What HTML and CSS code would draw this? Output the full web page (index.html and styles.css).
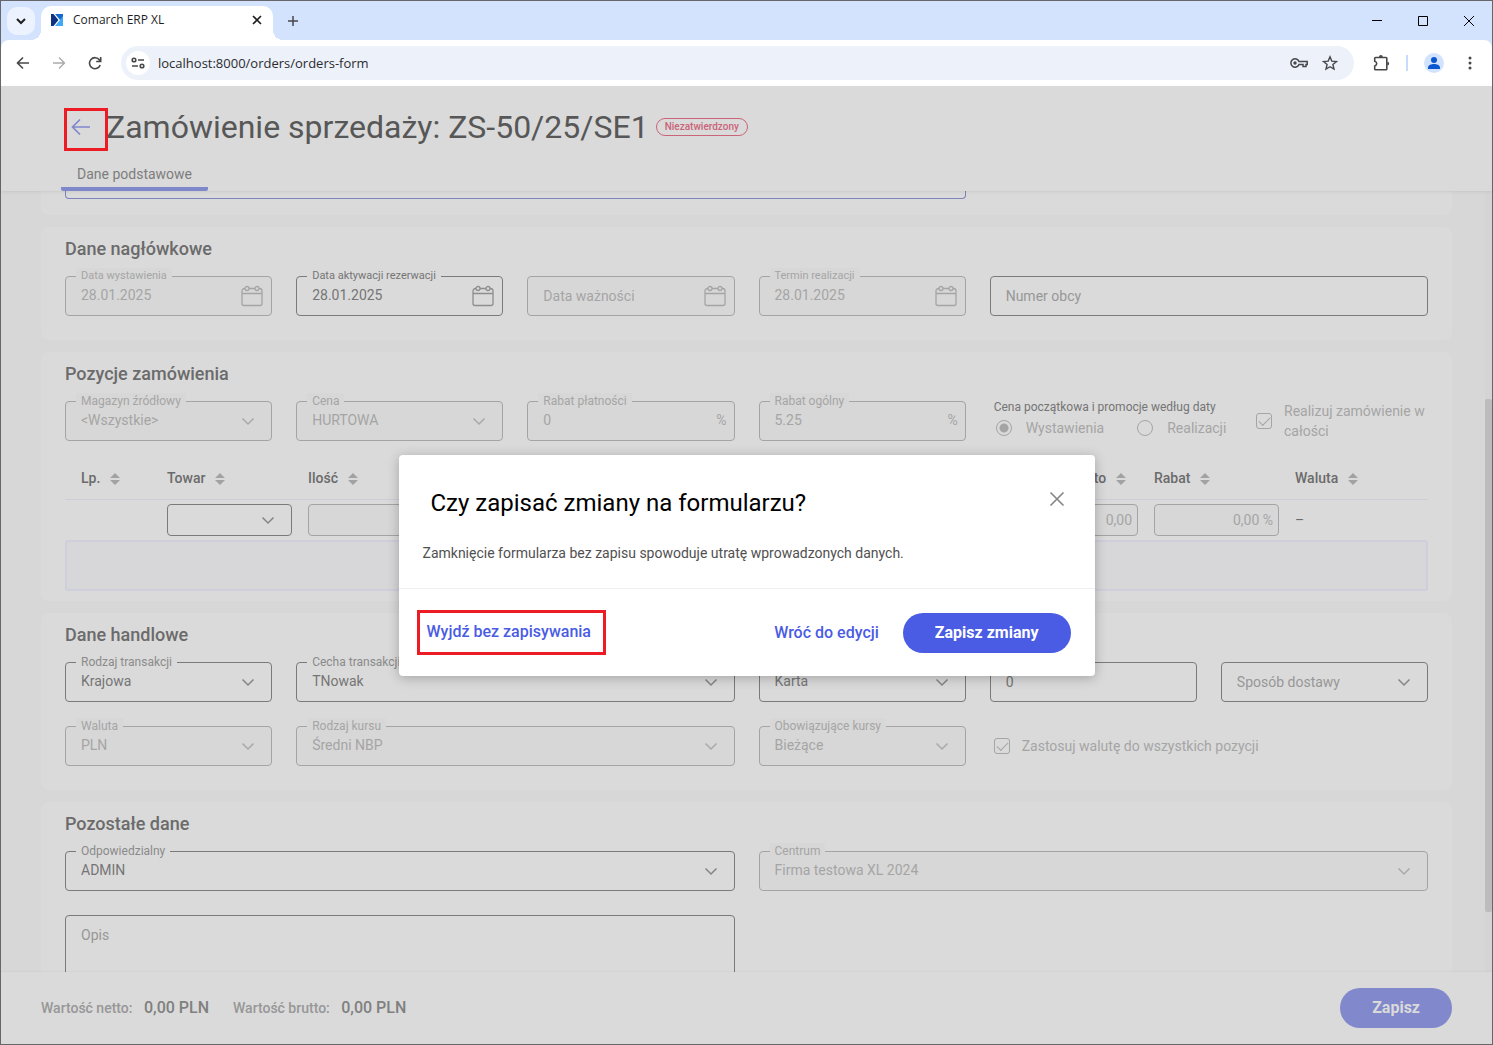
FILE: index.html
```html
<!DOCTYPE html>
<html lang="pl">
<head>
<meta charset="utf-8">
<title>Comarch ERP XL</title>
<link rel="stylesheet" href="styles.css">
</head>
<body>
<svg class="sprite" aria-hidden="true">
  <symbol id="chevron" viewBox="0 0 24 24"><path d="M6.500 9.500l5.500 5.500 5.500-5.500" fill="none" stroke="currentColor" stroke-width="1.500"/></symbol>
  <symbol id="calendar" viewBox="0 0 24 24"><g fill="none" stroke="currentColor" stroke-width="1.300"><path d="M5 4.500H4.500a2.500 2.500 0 0 0-2.500 2.500v12.500a2 2 0 0 0 2 2h16a2 2 0 0 0 2-2V7a2.500 2.500 0 0 0-2.500-2.500H19M9 4.500h6M2 9.500h20"/><circle cx="7" cy="4.500" r="2"/><circle cx="17" cy="4.500" r="2"/></g></symbol>
  <symbol id="sort" viewBox="0 0 10 12"><path d="M5 0l5 5H0zM5 12l5-5H0z" fill="currentColor"/></symbol>
</svg>
<div class="window">
  <header class="tabstrip">
    <button class="tab-search" aria-label="Karty"><svg width="12" height="12" viewBox="0 0 12 12"><path d="M2 4l4 4 4-4" fill="none" stroke="currentColor" stroke-width="2"/></svg></button>
    <div class="tab">
      <svg width="12" height="12" viewBox="0 0 12 12"><path d="M0 0h12v12H0z" fill="#3fa9f5"/><path d="M4 0h8v2L9 6z" fill="#1668d0"/><path d="M0 0h3l5 6-5 6H0z" fill="#10317f"/><path d="M2.500 0h1.500l5 6-5 6H2.500l5-6z" fill="#fff"/></svg>
      <span class="tab-title">Comarch ERP XL</span>
      <button class="plain" aria-label="Zamknij kartę"><svg width="10" height="10" viewBox="0 0 10 10"><path d="M1 1l8 8M9 1l-8 8" stroke="currentColor" stroke-width="1.600"/></svg></button>
    </div>
    <button class="plain new-tab" aria-label="Nowa karta"><svg width="12" height="12" viewBox="0 0 12 12"><path d="M6 1v10M1 6h10" stroke="currentColor" stroke-width="1.500"/></svg></button>
    <div class="window-controls">
      <button class="plain" aria-label="Minimalizuj"><svg width="12" height="12" viewBox="0 0 12 12"><path d="M1 5.500h10" stroke="currentColor"/></svg></button>
      <button class="plain" aria-label="Maksymalizuj"><svg width="12" height="12" viewBox="0 0 12 12"><path d="M1.500 1.500h9v9h-9z" fill="none" stroke="currentColor"/></svg></button>
      <button class="plain" aria-label="Zamknij okno"><svg width="12" height="12" viewBox="0 0 12 12"><path d="M1 1l10 10M11 1L1 11" stroke="currentColor"/></svg></button>
    </div>
  </header>
  <nav class="toolbar">
    <button class="plain" aria-label="Wstecz"><svg width="14" height="14" viewBox="0 0 14 14"><path d="M13 7H2M7 1.500L1.500 7 7 12.500" fill="none" stroke="currentColor" stroke-width="1.600"/></svg></button>
    <button class="plain faded" aria-label="Dalej"><svg width="14" height="14" viewBox="0 0 14 14"><path d="M1 7h11M7 1.500L12.500 7 7 12.500" fill="none" stroke="currentColor" stroke-width="1.400"/></svg></button>
    <button class="plain" aria-label="Odśwież"><svg width="14" height="14" viewBox="0 0 14 14"><path d="M12.200 9A5.500 5.500 0 1 1 11.500 4L12.500 5M12.700 1v4.500H8.200" fill="none" stroke="currentColor" stroke-width="1.600"/></svg></button>
    <div class="omnibox">
      <button class="plain site-info" aria-label="Informacje o witrynie"><svg width="14" height="12" viewBox="0 0 14 12"><g fill="none" stroke="currentColor" stroke-width="1.600"><circle cx="3" cy="3" r="1.800"/><path d="M7 3h6M1 9h6"/><circle cx="11" cy="9" r="1.800"/></g></svg></button>
      <input class="address" aria-label="Adres" value="localhost:8000/orders/orders-form">
      <button class="plain" aria-label="Hasła"><svg width="18" height="12" viewBox="0 0 18 12"><g fill="none" stroke="currentColor" stroke-width="1.500"><path d="M9 4.500h8.200v3H16v2h-3v-2H9a4.200 4.200 0 1 1 0-3z"/></g><circle cx="5" cy="6" r="1.700" fill="currentColor"/></svg></button>
      <button class="plain" aria-label="Zakładka"><svg width="16" height="16" viewBox="0 0 16 16"><path d="M8 1.800l1.800 4.300 4.700.4-3.600 3 1.100 4.600L8 11.700l-4 2.400 1.100-4.600-3.600-3 4.700-.4z" fill="none" stroke="currentColor" stroke-width="1.400"/></svg></button>
    </div>
    <button class="plain extensions" aria-label="Rozszerzenia"><svg width="18" height="18" viewBox="0 0 18 18"><path d="M3.500 3.500H14a.8.8 0 0 1 .8.800V15a.8.8 0 0 1-.8.800H3.500a.8.8 0 0 1-.8-.8v-3q2-.6 2-2.400t-2-2.400V4.300a.8.8 0 0 1 .8-.8z" fill="none" stroke="currentColor" stroke-width="1.600"/><path d="M7 3a1.900 1.900 0 0 1 3.800 0zM15.300 7.700a1.900 1.900 0 0 1 0 3.800z" fill="currentColor"/></svg></button>
    <span class="separator"></span>
    <button class="plain profile" aria-label="Profil"><svg width="14" height="14" viewBox="0 0 14 14"><circle cx="7" cy="4" r="3" fill="#0b57d0"/><path d="M1 13v-1.500C1 9 4.500 8 7 8s6 1 6 3.500V13z" fill="#0b57d0"/></svg></button>
    <button class="plain" aria-label="Menu"><svg width="4" height="14" viewBox="0 0 4 14"><g fill="currentColor"><circle cx="2" cy="2" r="1.500"/><circle cx="2" cy="7" r="1.500"/><circle cx="2" cy="12" r="1.500"/></g></svg></button>
  </nav>

  <main class="app">
    <header class="page-head">
      <div class="title-row">
        <button class="back" aria-label="Wróć"><svg width="20" height="18" viewBox="0 0 20 18"><path d="M19 9H2M9 1.500L1.500 9 9 16.500" fill="none" stroke="currentColor" stroke-width="1.700"/></svg></button>
        <h1>Zamówienie sprzedaży: ZS-50/25/SE1</h1>
        <span class="status">Niezatwierdzony</span>
      </div>
      <a class="page-tab" href="#dane">Dane podstawowe</a>
    </header>

    <div class="scroll-area">
      <div class="sections" id="dane">
        <section class="card card-clipped">
          <div class="grid"><div class="field focused span-4"><input aria-label="Kontrahent"></div></div>
        </section>

        <section class="card">
          <h2>Dane nagłówkowe</h2>
          <div class="grid dates">
            <div class="field disabled"><label for="f1">Data wystawienia</label><input id="f1" value="28.01.2025" disabled><svg class="cal"><use href="#calendar"/></svg></div>
            <div class="field"><label class="strong" for="f2">Data aktywacji rezerwacji</label><input id="f2" value="28.01.2025"><svg class="cal"><use href="#calendar"/></svg></div>
            <div class="field disabled"><input aria-label="Data ważności" placeholder="Data ważności" disabled><svg class="cal"><use href="#calendar"/></svg></div>
            <div class="field disabled"><label for="f4">Termin realizacji</label><input id="f4" value="28.01.2025" disabled><svg class="cal"><use href="#calendar"/></svg></div>
            <div class="field span-2"><input aria-label="Numer obcy" placeholder="Numer obcy"></div>
          </div>
        </section>

        <section class="card card-items">
          <h2>Pozycje zamówienia</h2>
          <div class="grid">
            <div class="field disabled"><label for="f6">Magazyn źródłowy</label><select id="f6" disabled><option>&lt;Wszystkie&gt;</option></select><svg class="chev"><use href="#chevron"/></svg></div>
            <div class="field disabled"><label for="f7">Cena</label><select id="f7" disabled><option>HURTOWA</option></select><svg class="chev"><use href="#chevron"/></svg></div>
            <div class="field disabled"><label for="f8">Rabat płatności</label><input id="f8" value="0" disabled><span class="unit">%</span></div>
            <div class="field disabled"><label for="f9">Rabat ogólny</label><input id="f9" value="5.25" disabled><span class="unit">%</span></div>
            <div class="options span-2">
              <fieldset class="radios">
                <legend>Cena początkowa i promocje według daty</legend>
                <label><input type="radio" name="wg" checked disabled>Wystawienia</label>
                <label><input type="radio" name="wg" disabled>Realizacji</label>
              </fieldset>
              <label class="check whole"><input type="checkbox" checked disabled><span>Realizuj zamówienie w całości</span></label>
            </div>
          </div>
          <table class="items">
            <colgroup><col class="col-no"><col class="col"><col class="col"><col class="col"><col class="col"><col class="col"><col class="col"><col class="col"><col class="col"><col></colgroup>
            <thead><tr>
              <th>Lp.<svg class="sort"><use href="#sort"/></svg></th>
              <th>Towar<svg class="sort"><use href="#sort"/></svg></th>
              <th>Ilość<svg class="sort"><use href="#sort"/></svg></th>
              <th></th><th></th><th></th><th></th>
              <th>Wartość brutto<svg class="sort"><use href="#sort"/></svg></th>
              <th>Rabat<svg class="sort"><use href="#sort"/></svg></th>
              <th>Waluta<svg class="sort"><use href="#sort"/></svg></th>
            </tr></thead>
            <tbody><tr>
              <td></td>
              <td><div class="field small"><select aria-label="Towar"><option></option></select><svg class="chev"><use href="#chevron"/></svg></div></td>
              <td><div class="field small disabled"><input aria-label="Ilość" disabled></div></td>
              <td></td><td></td><td></td><td></td>
              <td><div class="field small disabled"><input class="num" aria-label="Wartość brutto" value="0,00" disabled></div></td>
              <td><div class="field small disabled"><input class="num" aria-label="Rabat" value="0,00 %" disabled></div></td>
              <td>–</td>
            </tr></tbody>
          </table>
          <div class="drop-row"></div>
        </section>

        <section class="card">
          <h2>Dane handlowe</h2>
          <div class="grid">
            <div class="field"><label for="g1">Rodzaj transakcji</label><select id="g1"><option>Krajowa</option></select><svg class="chev"><use href="#chevron"/></svg></div>
            <div class="field span-2"><label for="g2">Cecha transakcji</label><select id="g2"><option>TNowak</option></select><svg class="chev"><use href="#chevron"/></svg></div>
            <div class="field"><label for="g3">Forma płatności</label><select id="g3"><option>Karta</option></select><svg class="chev"><use href="#chevron"/></svg></div>
            <div class="field"><input aria-label="Termin płatności" value="0"></div>
            <div class="field"><select class="empty" aria-label="Sposób dostawy"><option>Sposób dostawy</option></select><svg class="chev"><use href="#chevron"/></svg></div>
            <div class="field disabled"><label for="g6">Waluta</label><select id="g6" disabled><option>PLN</option></select><svg class="chev"><use href="#chevron"/></svg></div>
            <div class="field disabled span-2"><label for="g7">Rodzaj kursu</label><select id="g7" disabled><option>Średni NBP</option></select><svg class="chev"><use href="#chevron"/></svg></div>
            <div class="field disabled"><label for="g8">Obowiązujące kursy</label><select id="g8" disabled><option>Bieżące</option></select><svg class="chev"><use href="#chevron"/></svg></div>
            <label class="check currency span-2"><input type="checkbox" checked disabled><span>Zastosuj walutę do wszystkich pozycji</span></label>
          </div>
        </section>

        <section class="card">
          <h2>Pozostałe dane</h2>
          <div class="grid">
            <div class="field span-3"><label for="h1">Odpowiedzialny</label><select id="h1"><option>ADMIN</option></select><svg class="chev"><use href="#chevron"/></svg></div>
            <div class="field disabled span-3"><label for="h2">Centrum</label><select id="h2" disabled><option>Firma testowa XL 2024</option></select><svg class="chev"><use href="#chevron"/></svg></div>
            <div class="field tall span-3"><textarea aria-label="Opis" placeholder="Opis"></textarea></div>
          </div>
        </section>
      </div>
      <div class="scrollbar"><span class="before"></span><span class="thumb"></span><span class="after"></span></div>
    </div>

    <footer class="page-foot">
      <span class="sum">Wartość netto: <strong>0,00 PLN</strong></span>
      <span class="sum">Wartość brutto: <strong>0,00 PLN</strong></span>
      <button class="pill muted">Zapisz</button>
    </footer>

    <div class="overlay">
      <div class="dialog" role="dialog" aria-labelledby="dlg-title">
        <div class="dialog-head">
          <h2 id="dlg-title">Czy zapisać zmiany na formularzu?</h2>
          <button class="plain close" aria-label="Zamknij"><svg width="16" height="16" viewBox="0 0 16 16"><path d="M1.500 1.500l13 13M14.500 1.500l-13 13" stroke="currentColor" stroke-width="1.600"/></svg></button>
        </div>
        <p>Zamknięcie formularza bez zapisu spowoduje utratę wprowadzonych danych.</p>
        <div class="dialog-foot">
          <button class="link marked">Wyjdź bez zapisywania</button>
          <button class="link">Wróć do edycji</button>
          <button class="pill">Zapisz zmiany</button>
        </div>
      </div>
    </div>
  </main>
</div>
</body>
</html>
```
FILE: styles.css
```css
* { box-sizing: border-box; }
body { margin: 0; font: 14px/20px Roboto, sans-serif; color: #6b6b6b; }
button, input, select, textarea { font: inherit; color: inherit; margin: 0; }
h1, h2, p { margin: 0; font-weight: 400; }
.sprite { display: none; }
.window { display: flex; flex-direction: column; height: 100vh; border: 1px solid #66666b; background: #d3e3fd; }
.plain { display: flex; align-items: center; justify-content: center; padding: 0; border: 0; background: none; }

/* Browser frame */
.tabstrip { display: flex; align-items: center; height: 39px; padding-left: 6px; color: #1f1f1f; }
.tab-search { display: flex; align-items: center; justify-content: center; width: 28px; height: 28px; padding: 0; border: 0; border-radius: 10px; background: #ecf2fe; }
.tab { position: relative; display: flex; align-items: center; align-self: flex-end; width: 232px; height: 34px; margin-left: 6px; padding: 0 11px 6px 10px; border-radius: 10px 10px 0 0; background: #fff; }
.tab::before, .tab::after { content: ""; position: absolute; bottom: 0; width: 10px; height: 10px; }
.tab::before { right: 100%; background: radial-gradient(circle at 0 0, transparent 10px, #fff 10px); }
.tab::after { left: 100%; background: radial-gradient(circle at 100% 0, transparent 10px, #fff 10px); }
.tab-title { flex: 1; margin-left: 10px; font: 12px/16px "Open Sans", sans-serif; }
.new-tab { margin-left: 14px; color: #47484a; }
.window-controls { display: flex; gap: 34px; margin-left: auto; padding-right: 17px; color: #000; }
.toolbar { display: flex; align-items: center; height: 46px; padding: 0 20px 0 15px; gap: 22px; border-radius: 8px 8px 0 0; background: #fff; color: #47484a; }
.faded { color: #a9abad; }
.omnibox { display: flex; align-items: center; flex: 1; gap: 14px; height: 34px; margin-left: -3px; padding: 0 16px 0 5px; border-radius: 17px; background: #edf1fa; }
.site-info { width: 24px; height: 24px; border-radius: 12px; background: #fff; }
.address { flex: 1; margin-left: -6px; padding: 0; border: 0; background: none; font: 13px/20px "Open Sans", sans-serif; color: #2b2c2e; }
.extensions { margin-left: -4px; }
.separator { width: 2px; height: 16px; margin: 0 -6px; background: #c7dbfb; }
.profile { width: 20px; height: 20px; margin-right: 2px; border-radius: 10px; background: #d3e3fd; }

/* Page */
.app { position: relative; display: flex; flex: 1; flex-direction: column; min-height: 0; background: #d7d7d7; }
.page-head { position: relative; z-index: 1; height: 105px; padding: 22px 60px 0; background: #dadada; box-shadow: 0 1px 3px rgba(0, 0, 0, .08); }
.title-row { display: flex; align-items: center; height: 43px; padding-left: 3px; }
.back { position: relative; display: flex; align-items: center; width: 44px; height: 43px; padding: 0 0 6px 4px; border: 3px solid #ed1c24; background: none; color: #8088cc; }
h1 { margin-left: -2px; padding-bottom: 6px; font-size: 32px; line-height: 40px; color: #575757; white-space: nowrap; }
.status { margin: 0 0 6px 7px; padding: 0 8px; border: 1px solid #ca6478; border-radius: 9px; font-size: 10px; font-weight: 500; line-height: 16px; color: #ca6478; }
.page-tab { display: inline-block; height: 36px; margin-top: 4px; padding: 9px 16px 0; border-bottom: 4px solid #8088cc; border-radius: 2px; line-height: 20px; color: #7d7d7d; text-decoration: none; }
.scroll-area { display: flex; flex: 1; min-height: 0; overflow: hidden; }
.sections { display: flex; flex: 1; flex-direction: column; gap: 12px; padding: 0 33px 0 40px; }
.scrollbar { display: flex; flex-direction: column; width: 7px; background: #d4d4d4; }
.before { flex: 208; }
.thumb { flex: 513; border-radius: 2px; background: #bcbcbc; }
.after { flex: 60; }

.card { flex: none; padding: 12px 24px 24px; border-radius: 8px; background: #dadada; }
.card h2 { margin-bottom: 17px; font-size: 18px; font-weight: 500; color: #6b6b6b; }
.card-clipped { padding: 0 24px 16px; border-radius: 0 0 8px 8px; }
.card-clipped .field { height: 8px; border-top: 0; border-radius: 0 0 4px 4px; }
.card-items { padding-bottom: 10px; }
.grid { display: grid; grid-template-columns: repeat(6, minmax(0, 1fr)); gap: 24px; }
.span-2 { grid-column: span 2; }
.span-3 { grid-column: span 3; }
.span-4 { grid-column: span 4; }

.field { position: relative; display: flex; align-items: center; height: 40px; border: 1px solid #7a7a7a; border-radius: 4px; background: #dadada; color: #757575; }
.field > label { position: absolute; top: -9px; left: 10px; padding: 0 5px; font-size: 12px; line-height: 16px; background: inherit; color: #8a8a8a; white-space: nowrap; }
.dates .field > label { font-size: 11px; }
.field > label.strong { color: #757575; }
.field input, .field select, .field textarea { flex: 1; min-width: 0; width: 100%; height: 100%; padding: 0 0 0 15px; border: 0; outline: 0; background: none; appearance: none; opacity: 1; }
.field label + input, .field label + select { padding-bottom: 2px; }
.field ::placeholder, .field .empty { color: #979797; opacity: 1; }
.field.disabled { border-color: #a4a4a4; background: #d7d7d7; color: #a5a5a5; }
.field.disabled > label, .field.disabled ::placeholder { color: #a5a5a5; }
.field input:disabled, .field select:disabled { color: #a5a5a5; }
.field.focused { border-color: #7c83bd; }
.chev { width: 24px; height: 24px; margin-right: 11px; flex: none; color: #858585; }
.disabled .chev { color: #a9a9a9; }
.cal { width: 24px; height: 24px; margin-right: 7px; flex: none; color: #8e8e8e; }
.disabled .cal { color: #a5a5a5; }
.unit { margin-right: 7px; padding-bottom: 2px; }
.field.small { height: 32px; }
.field .num { padding: 0 5px; text-align: right; }
.field.tall { height: 112px; }
.field textarea { padding-top: 9px; resize: none; }

.options { display: flex; justify-content: space-between; height: 40px; }
.radios { display: flex; flex-wrap: wrap; gap: 0 33px; width: 250px; min-width: 0; margin: -1px 0 0; padding: 0 0 0 6px; border: 0; color: #a5a5a5; }
.radios legend { margin-left: -2px; padding: 0; font-size: 12px; line-height: 14px; color: #757575; white-space: nowrap; }
.radios label { display: flex; align-items: center; gap: 14px; height: 28px; }
input[type="radio"], input[type="checkbox"] { flex: none; width: 16px; height: 16px; border: 1px solid #a5a5a5; appearance: none; }
input[type="radio"] { border-radius: 50%; }
input[type="radio"]:checked { background: radial-gradient(circle, #a5a5a5 4px, transparent 5px); }
input[type="checkbox"] { position: relative; border-radius: 3px; }
input[type="checkbox"]::after { content: ""; position: absolute; left: 2px; top: 3px; width: 10px; height: 5px; border: solid #a5a5a5; border-width: 0 0 1px 1px; transform: rotate(-45deg); }
.check { display: flex; align-items: center; gap: 12px; color: #a5a5a5; }
.whole { flex: none; width: 172px; margin-left: -150px; }
.currency { padding-left: 4px; }

.items { width: 100%; margin-top: 16px; border-collapse: separate; border-spacing: 0; table-layout: fixed; }
.col-no { width: 102px; }
.col { width: 141px; }
th { height: 43px; padding: 0; border-bottom: 1px solid #cdcdd8; font-weight: 500; text-align: left; white-space: nowrap; color: #6b6b6b; }
th:first-child { padding-left: 16px; }
.sort { width: 10px; height: 12px; margin-left: 10px; vertical-align: -2px; color: #a2a2a2; }
td { height: 40px; padding: 4px 16px 4px 0; }
.drop-row { height: 51px; border: 2px solid #cfcfdc; border-radius: 3px; background: #d7d7d9; }

.page-foot { position: relative; display: flex; align-items: center; gap: 24px; height: 72px; padding: 0 40px; background: #dadada; box-shadow: 0 -1px 2px rgba(0, 0, 0, .03); }
.sum { font-weight: 500; color: #979797; }
.sum strong { margin-left: 8px; font-size: 16px; font-weight: 500; color: #808080; }
.pill { height: 40px; padding: 0 32px; border: 0; border-radius: 20px; background: #4a5ce3; font-size: 16px; font-weight: 700; color: #fff; }
.pill.muted { margin-left: auto; background: #8188cc; color: #dadada; }

/* Confirmation dialog */
.overlay { position: absolute; inset: 0; z-index: 2; display: flex; align-items: center; justify-content: center; }
.dialog { width: 696px; border-radius: 4px; background: #fff; box-shadow: 0 2px 12px rgba(0, 0, 0, .25); }
.dialog-head { display: flex; padding: 32px 30px 0 32px; }
.dialog-head h2 { flex: 1; font-size: 24px; line-height: 32px; color: #000; }
.close { height: 24px; color: #858585; }
.dialog p { padding: 24px 24px 25px; border-bottom: 1px solid #efefef; color: #505050; }
.dialog-foot { display: flex; align-items: flex-end; gap: 24px; padding: 21px 24px 21px 18px; }
.dialog-foot .link, .dialog-foot .pill { margin-bottom: 2px; }
.link { height: 40px; padding: 0; border: 0; background: none; font-size: 16px; font-weight: 500; color: #4a5ce3; }
.dialog-foot .marked { height: 45px; margin: 0 auto 0 0; padding: 0 12px 0 7px; border: 3px solid #ed1c24; }
```
